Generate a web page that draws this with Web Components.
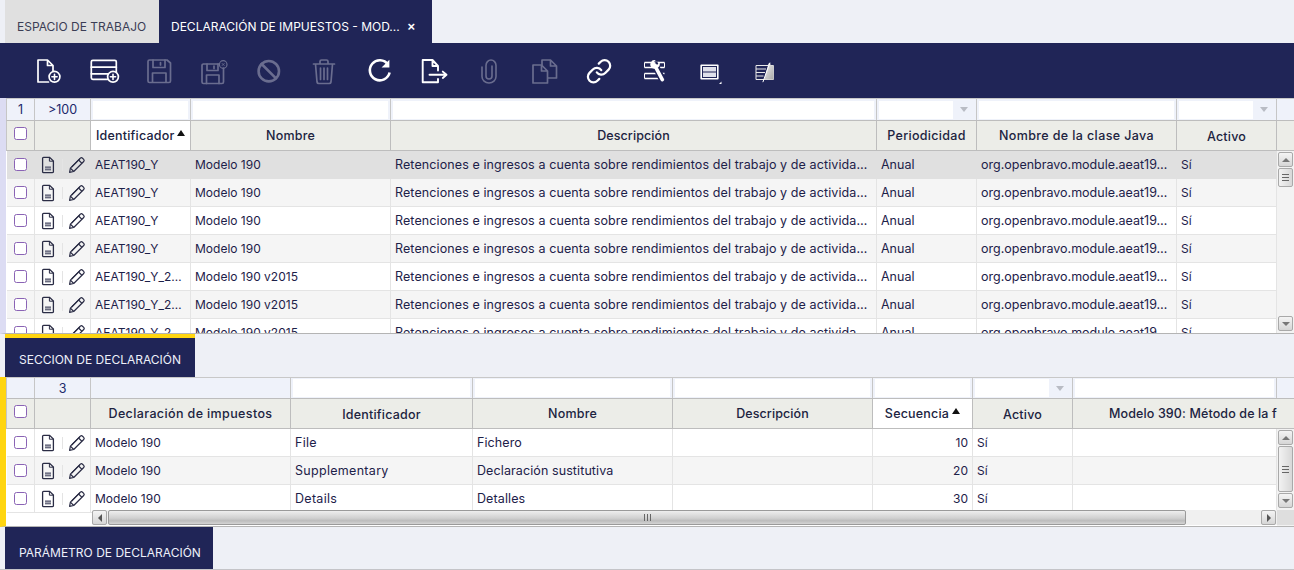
<!DOCTYPE html>
<html lang="es"><head><meta charset="utf-8"><title>Declaración de impuestos</title>
<style>
html,body{margin:0;padding:0;height:570px;overflow:hidden;background:#eef0f6;font-family:Inter,"Liberation Sans",sans-serif;color:#1d2149}
body{display:flex;flex-direction:column}
</style></head><body>
<x-tabs><x-tab>ESPACIO DE TRABAJO</x-tab><x-tab active closable>DECLARACIÓN DE IMPUESTOS - MOD...</x-tab></x-tabs>
<x-toolbar></x-toolbar>
<x-grid id="g1" strip="#dcdcf3" style="--h:236px"></x-grid>
<x-section yellow w="190">SECCION DE DECLARACIÓN</x-section>
<x-grid id="g2" strip="#ffd510" style="--h:150px"></x-grid>
<x-section w="208" last>PARÁMETRO DE DECLARACIÓN</x-section>
<script>
const NAVY='#202557';
class XTabs extends HTMLElement{constructor(){super();this.attachShadow({mode:'open'}).innerHTML=`<style>:host{display:flex;height:43px;padding-left:5px;flex:none}</style><slot></slot>`}}
class XTab extends HTMLElement{constructor(){super();this.attachShadow({mode:'open'}).innerHTML=`<style>
:host{display:flex;align-items:center;height:43px;width:154px;padding:9px 0 0 12px;background:#e0e0e0;color:#3b3d55;font-size:12px;box-sizing:border-box;white-space:nowrap}
:host([active]){background:${NAVY};color:#fff;padding:9px 17px 0 12px;width:273px;justify-content:space-between}
b{display:none;font:700 13px "Liberation Sans";color:#fff}
:host([closable]) b{display:block}
</style><span><slot></slot></span><b>×</b>`}}
const ico=(s)=>`<svg width="32" height="32" viewBox="0 0 32 32" fill="none" stroke="currentColor" stroke-width="1.7" stroke-linejoin="round" stroke-linecap="round">${s}</svg>`;
const plus=(x,y)=>`<circle cx="${x}" cy="${y}" r="5.4" fill="${NAVY}"/><path d="M${x-2.6} ${y}h5.2M${x} ${y-2.6}v5.2" stroke-width="1.6"/>`;
const ICONS=[
[1,`<path d="M5 5H14.5L20 10.5V16.5M15.5 27H5V5M14.5 5V10.5H20"/>`+plus(21.5,21.8)],
[1,`<rect x="3.3" y="5.3" width="25" height="19" rx="1.5"/><path d="M3.3 12.2H28.3M3.3 18.8H28.3" stroke-width="1.8"/>`+plus(25,21.8)],
[0,`<path d="M6.5 5H24L27.5 8V26a1.5 1.5 0 0 1-1.5 1.5H6.5A1.5 1.5 0 0 1 5 26V6.5A1.5 1.5 0 0 1 6.5 5Z"/><path d="M10 5V12.5H22V5M17.5 7.5V10M9.5 27V18H23V27"/>`],
[0,`<path d="M6 9H21M25.5 13V27a1.5 1.5 0 0 1-1.5 1.5H5.5A1.5 1.5 0 0 1 4 27V10.5A1.5 1.5 0 0 1 5.5 9"/><path d="M9 9V15.5H20V9M16 11V13.5M8.5 28.5V20H21V28.5"/><circle cx="25.2" cy="9.5" r="3.8" stroke-width="1.2"/><path d="M24.2 8.5l2 2m0-2l-2 2" stroke-width=".9"/>`],
[0,`<circle cx="15.8" cy="16.2" r="10.2" stroke-width="2.6"/><path d="M8.6 9L23 23.4" stroke-width="2.6"/>`],
[0,`<path d="M5.5 9H26.5M12 9V6.5A1.5 1.5 0 0 1 13.5 5H18.5A1.5 1.5 0 0 1 20 6.5V9M7.5 9L9 27a1.8 1.8 0 0 0 1.8 1.5H21.2A1.8 1.8 0 0 0 23 27L24.5 9M12.5 13V24.5M16 13V24.5M19.5 13V24.5"/>`],
[1,`<path d="M25 9.5A10 10 0 1 0 26.6 17.5" stroke-width="2.6" stroke-linecap="butt"/><path d="M26.4 4.8V12.6H18.6Z" fill="currentColor" stroke="none"/>`],
[1,`<path d="M20 15.5V11L14.5 5H4.7V27.2H20V24M14.5 5V11H20" stroke-width="1.9"/><path d="M11.5 19.8H28M24.8 16.6L28.5 19.8L24.8 23" stroke-width="1.9"/>`],
[0,`<path d="M9 12V21.5A7 6.5 0 0 0 23 21.5V10.5A5 5.5 0 0 0 13 10.5V21A3 3 0 0 0 19 21V11" stroke-width="1.6"/>`],
[0,`<path d="M13.5 10H5V28H19.5V16M13.5 10L19.5 16H13.5V10Z"/><path d="M14 10V5H22.5L28.5 11V23H20M22.5 5V11H28.5"/>`],
[1,`<g transform="translate(2.6,2.8) scale(1.12)"><path d="M10 13a5 5 0 0 0 7.54.54l3-3a5 5 0 0 0-7.07-7.07l-1.72 1.71" stroke-width="2"/><path d="M14 11a5 5 0 0 0-7.54-.54l-3 3a5 5 0 0 0 7.07 7.07l1.71-1.71" stroke-width="2"/></g>`],
[1,`<path d="M6.5 7.5H26.5M6.5 12.5H26.5M6.5 18.5H26.5M6.5 23.5H26.5" stroke-width="1.3" stroke-linecap="butt"/><path d="M6.5 7.5V12.5M26.5 7.5V12.5M6.5 18.5V23.5" stroke-width="1" stroke-linecap="butt"/><path d="M16 8L24.5 25" stroke="${NAVY}" stroke-width="7" stroke-linecap="butt"/><path d="M16.5 10L24.3 24.6" stroke-width="3.6"/><path d="M12.9 7.6a4 4 0 0 0 5.6 5.4a4 4 0 0 0 2.4-6.6L19.8 9.4L17 9.2L16.2 6.4L17.8 5.4a4 4 0 0 0-4.9 2.2Z" fill="currentColor" stroke="none"/>`],
[1,`<rect x="8.2" y="10.2" width="16.6" height="13.6" stroke-width="1.6" stroke-linecap="butt"/><path d="M10 12H23V16.4H10ZM10 17.6H23V22H10Z" fill="#dfe0ea" stroke="none"/><path d="M28.5 26.5V29H26Z" fill="#fff" stroke="none"/>`],
[1,`<defs><linearGradient id="ng" x1="0" y1="0" x2="1" y2="1"><stop offset="0" stop-color="#f2f2f2"/><stop offset="1" stop-color="#a8a8a8"/></linearGradient></defs><path d="M8 10.5H25.4V24.5H8Z" stroke="#e8e8e8" stroke-width="1" stroke-linecap="butt"/><path d="M8 14H18M8 17.5H17M8 21H15.5" stroke="#e8e8e8" stroke-width="1" stroke-linecap="butt"/><path d="M20.5 8.5H22.5V10.5H25.5V24.5H16Z" fill="url(#ng)" stroke="none"/><path d="M21.8 8L15 26.8" stroke="#fff" stroke-width="1"/>`]
];
class XToolbar extends HTMLElement{constructor(){super();this.attachShadow({mode:'open'}).innerHTML=`<style>
:host{display:flex;flex:none;height:55px;background:${NAVY};padding-left:21px;box-sizing:border-box}
span{display:flex;width:55px;height:55px;align-items:center;justify-content:center;color:#fff}
span.off{color:#6a6d8f}
svg{display:block}
</style>`+ICONS.map(([on,s])=>`<span class="${on?'':'off'}">${ico(s)}</span>`).join('')}}
class XSection extends HTMLElement{
constructor(){super();this.attachShadow({mode:'open'}).innerHTML=`<style>
:host{display:block;flex:none;padding-left:5px;box-sizing:border-box;height:43px}
div{height:100%;box-sizing:border-box;background:${NAVY};color:#eef0fa;font-size:12px;display:flex;align-items:center;padding:9px 0 0 14px;white-space:nowrap}
:host([yellow]) div{border-top:4px solid #ffd510;padding-top:3px}
:host([last]){border-bottom:1px solid #c4c4c8}
</style><div><slot></slot></div>`}
connectedCallback(){this.shadowRoot.querySelector('div').style.width=this.getAttribute('w')+'px'}}
const arrow='<svg class="sort" width="8" height="6" viewBox="0 0 8 6"><path d="M4 0L8 6H0Z" fill="#111"/></svg>';
const docI=`<svg width="16" height="18" viewBox="0 0 16 18" fill="none" stroke="#2a2c45" stroke-width="1.3"><path d="M2.6 2.3a1 1 0 0 1 1-1H9.6L13.4 5V15.7a1 1 0 0 1-1 1H3.6a1 1 0 0 1-1-1Z"/><path d="M9.4 1.4V5.2H13.3" stroke-width="1"/><path d="M5 10.4H11V14.4H5Z" fill="#6a6c80" stroke="none"/><path d="M5 12.4H11" stroke="#d6d6da" stroke-width=".6"/></svg>`;
const penI=`<svg width="18" height="18" viewBox="0 0 18 18" fill="none" stroke="#2a2c45" stroke-width="1.2" stroke-linejoin="round"><path d="M2.4 12.2L12.4 2.2a1.5 1.5 0 0 1 2.1 0l1.2 1.2a1.5 1.5 0 0 1 0 2.1L5.7 15.5L1.6 16.4Z"/><path d="M10.6 4L14 7.4M2.4 12.2L5.7 15.5M3.7 11L12 2.7"/></svg>`;
class XGrid extends HTMLElement{constructor(){super();this.attachShadow({mode:'open'})}
set config(c){const cols=c.cols.map(x=>x.w+'px').join(' ');const total=c.cols.reduce((a,x)=>a+x.w,0);
const cell=(t,col)=>`<div class="c ${col.right?'rt':''}" style="${col.cs||''}"><span>${t}</span></div>`;
const filter=c.cols.map((col,i)=>{
 if(i<2)return `<div class="f n">${c.count[i]}</div>`;
 if(col.nofilter)return `<div class="f"></div>`;
 return `<div class="f"><i class="inp"></i>${col.drop?'<em></em>':''}</div>`}).join('');
const head=c.cols.map((col,i)=>i==0?`<div class="h ckh"><u></u></div>`:i==1?`<div class="h"></div>`:
 `<div class="h ${col.sort?'s':''} ${col.left?'l':''} ${col.low?'lo':''} ${col.clip?'cl':''}" style="${col.hs||''}"><span>${col.t}</span>${col.sort?arrow:''}</div>`).join('');
const rows=c.rows.map((r,ri)=>`<div class="r ${ri==c.sel?'sel':''} ${ri%2?'odd':''}" style="grid-template-columns:${cols}">
 <div class="c ck"><u></u></div><div class="c ic">${docI}<s></s>${penI}</div>${r.map((t,i)=>cell(t,c.cols[i+2])).join('')}</div>`).join('');
this.shadowRoot.innerHTML=`<style>
:host{display:flex;flex-direction:column;flex:none;height:var(--h);box-sizing:border-box;border-left:6px solid ${this.getAttribute('strip')};border-bottom:1px solid #b4b4b4;background:#fff;font-size:12px;position:relative;overflow:hidden;color:#1d2149}
.fr{flex:none;display:grid;background:#eff2fa;border-bottom:1px solid #bdbdbd;box-sizing:border-box;border-top:1px solid #c8c8c8;border-left:1px solid #c6c6c6;grid-template-columns:${cols} 1fr;height:${c.fh}px}
.f{border-right:1px solid #c6c6c6;display:flex;align-items:center;padding:0 2px;box-sizing:border-box;min-width:0}
.f.n{justify-content:center;font-size:12.5px;color:#20286a}
.inp{flex:1;height:18px;background:#fff;display:block;min-width:0}
em{flex:none;width:21px;height:100%;position:relative}
em:after{content:"";position:absolute;left:7px;top:8px;border:4px solid transparent;border-top:5px solid #b9bcc4;border-bottom:0}
.hr{flex:none;display:grid;height:30px;box-sizing:border-box;border-bottom:1px solid #bdbdbd;background:#ecede8;border-left:1px solid #c6c6c6;grid-template-columns:${cols} 1fr}
.h{border-right:1px solid #bdbdbd;display:flex;align-items:center;justify-content:center;font-weight:500;font-size:12.5px;letter-spacing:.2px;color:#20233f;white-space:nowrap;overflow:hidden;box-sizing:border-box;padding-bottom:1px;min-width:0}
.h.ckh{padding-bottom:4px}
.h.s{background:#fff}
.h.l{justify-content:flex-start;padding-left:5px}
.h.lo span{position:relative;top:1px}
.h.cl{justify-content:flex-start;padding-left:36px;border-right:0}
.sort{margin:0 0 4px 3px;flex:none}
u{display:block;width:10.4px;height:10.4px;border:1.3px solid #8a63b5;border-radius:2.5px;background:#fff;box-sizing:content-box}
.mid{flex:1;display:flex;min-height:0;position:relative}
.body{width:${total+1}px;flex:none;overflow:hidden;padding-left:1px;box-sizing:border-box;background:#fff}
.r{display:grid;height:28px;box-sizing:border-box;background:#fff;border-bottom:1px solid #e4e4e4}
.r.odd{background:#f5f5f5}
.r.sel{background:#e0e0e0;border-bottom-color:#e0e0e0}
.c{border-right:1px solid #e4e4e4;display:flex;align-items:center;padding:0 4px;white-space:nowrap;overflow:hidden;min-width:0;box-sizing:border-box;color:#1d2149}
.r.sel .c{border-right-color:#e0e0e0}
.rt{justify-content:flex-end}
.ck{justify-content:center;padding:0}
.ic{padding:0 0 0 5px}
.ic s{display:block;width:1px;height:12px;background:#e4e4e4;margin:0 5px 0 6px;flex:none}
.ic svg{flex:none}
</style>
<div class="fr">${filter}<div class="f" style="border:0"></div></div>
<div class="hr">${head}<div class="h" style="border:0"></div></div>
<div class="mid"><div class="body">${rows}</div><x-vscroll thumb="${c.thumb}"></x-vscroll>${c.hscroll?'<x-hscroll></x-hscroll>':''}</div>`}
}
const btn=`background:linear-gradient(#f4f4f4,#d6d6d6);border:1px solid #a9a9a9;border-radius:2px;box-sizing:border-box;display:flex;align-items:center;justify-content:center;flex:none`;
class XVScroll extends HTMLElement{constructor(){super();this.attachShadow({mode:'open'})}
connectedCallback(){const t=this.getAttribute('thumb').split(',');this.shadowRoot.innerHTML=`<style>
:host{display:flex;flex-direction:column;width:17px;flex:none;background:#f3f3f3;padding:1px 1px 2px 1px;box-sizing:border-box;height:100%}
.b{height:15px;${btn};width:15px}
.t{width:15px;height:${t[0]}px;margin-top:1px;background:linear-gradient(90deg,#f2f2f2,#d8d8d8);border:1px solid #a9a9a9;border-radius:2px;box-sizing:border-box;display:flex;align-items:center;justify-content:center;flex:none}
.g{width:7px;height:7px;background:repeating-linear-gradient(#666 0 1px,transparent 1px 3px)}
.sp{flex:1}
.up{border:4px solid transparent;border-bottom:4px solid #777;border-top:0}
.dn{border:4px solid transparent;border-top:4px solid #777;border-bottom:0}
</style><div class="b"><div class="up"></div></div><div class="t"><div class="g"></div></div><div class="sp"></div><div class="b"><div class="dn"></div></div>${t[1]?`<div style="height:${t[1]}px;flex:none"></div>`:''}`}}
class XHScroll extends HTMLElement{constructor(){super();this.attachShadow({mode:'open'}).innerHTML=`<style>
:host{display:flex;position:absolute;left:86px;right:0;bottom:1px;height:15px;background:#f0f0f0;box-sizing:border-box;align-items:stretch}
.b{width:15px;${btn}}
.t{width:1078px;margin-left:1px;background:linear-gradient(#eee,#d0d0d0 55%,#bcbcbc 75%,#d4d4d4);border:1px solid #9a9a9a;border-radius:2px;box-sizing:border-box;display:flex;align-items:center;justify-content:center;flex:none}
.g{width:7px;height:7px;background:repeating-linear-gradient(90deg,#666 0 1px,transparent 1px 3px)}
.sp{flex:1}
.l{border:4px solid transparent;border-right:4px solid #555;border-left:0}
.rr{border:4px solid transparent;border-left:4px solid #555;border-right:0}
.cn{width:17px;background:#dedede;flex:none}
</style><div class="b"><div class="l"></div></div><div class="t"><div class="g"></div></div><div class="sp"></div><div class="b"><div class="rr"></div></div><div style="width:1px;flex:none"></div><div class="cn"></div>`}}
[['x-tabs',XTabs],['x-tab',XTab],['x-toolbar',XToolbar],['x-section',XSection],['x-vscroll',XVScroll],['x-hscroll',XHScroll],['x-grid',XGrid]].forEach(([n,c])=>customElements.define(n,c));
const D='Retenciones e ingresos a cuenta sobre rendimientos del trabajo y de activida…',J='org.openbravo.module.aeat19…';
const r1=(a,b)=>[a,b,D,'Anual',J,'Sí'];
const big='font-size:12.5px;',wide='letter-spacing:.38px;';
document.getElementById('g1').config={fh:23,count:['1','&gt;100'],sel:0,thumb:'19',
cols:[{w:28},{w:56},{w:100,t:'Identificador',sort:1,left:1},{w:200,t:'Nombre'},{w:486,t:'Descripción',cs:big+'letter-spacing:.1px',hs:'letter-spacing:.1px'},{w:100,t:'Periodicidad',drop:1,cs:big,hs:'letter-spacing:.3px'},{w:200,t:'Nombre de la clase Java',cs:big,hs:wide},{w:100,t:'Activo',drop:1,low:1}],
rows:[r1('AEAT190_Y','Modelo 190'),r1('AEAT190_Y','Modelo 190'),r1('AEAT190_Y','Modelo 190'),r1('AEAT190_Y','Modelo 190'),r1('AEAT190_Y_2…','Modelo 190 v2015'),r1('AEAT190_Y_2…','Modelo 190 v2015'),r1('AEAT190_Y_2…','Modelo 190 v2015')]};
document.getElementById('g2').config={fh:22,count:['','3'],sel:-1,thumb:'46,16',hscroll:1,
cols:[{w:28},{w:56},{w:200,t:'Declaración de impuestos',nofilter:1,hs:wide},{w:182,t:'Identificador',low:1,cs:big+'letter-spacing:.3px'},{w:200,t:'Nombre',cs:big+'letter-spacing:.1px'},{w:200,t:'Descripción',hs:'letter-spacing:.1px'},{w:100,t:'Secuencia',sort:1,right:1},{w:100,t:'Activo',drop:1,low:1},{w:204,t:'Modelo 390: Método de la f',clip:1,hs:'letter-spacing:.12px'}],
rows:[['Modelo 190','File','Fichero','','10','Sí',''],['Modelo 190','Supplementary','Declaración sustitutiva','','20','Sí',''],['Modelo 190','Details','Detalles','','30','Sí','']]};
</script></body></html>
